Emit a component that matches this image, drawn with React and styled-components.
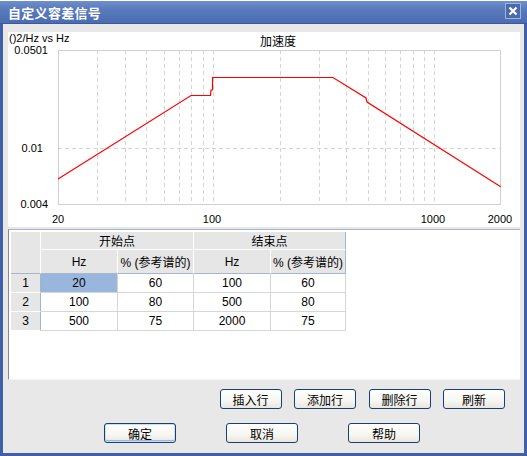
import React from "react";
import styled, { createGlobalStyle, css } from "styled-components";

const GlobalStyle = createGlobalStyle`
  html, body {
    margin: 0;
    padding: 0;
    background: #ffffff;
    overflow: hidden;
  }
  * {
    box-sizing: border-box;
  }
`;

const FONT = `"Liberation Sans", "Noto Sans CJK SC", sans-serif`;

const Window = styled.div`
  width: 527px;
  height: 455px;
  margin-top: 1px;
  display: flex;
  flex-direction: column;
  background: #3f5fa8;
  font-family: ${FONT};
  font-size: 12px;
  color: #000;
`;

const TitleBar = styled.div`
  height: 23px;
  display: flex;
  align-items: center;
  justify-content: space-between;
  padding: 0 6px 0 8px;
  background: linear-gradient(#6f8fcc 0%, #5a7bbd 35%, #4b6cb0 100%);
  border-bottom: 1px solid #3a5aa0;
`;

const Title = styled.span`
  color: #ffffff;
  font-size: 13px;
  font-weight: bold;
  letter-spacing: 0.3px;
`;

const CloseButton = styled.div`
  width: 16px;
  height: 16px;
  margin-top: -2px;
  border: 1px solid #9fb4dc;
  background: #4a6ab0;
  display: flex;
  align-items: center;
  justify-content: center;
`;

const Client = styled.div`
  flex: 1;
  margin: 0 3px 3px 3px;
  background: #e8e8e8;
  padding: 8px 0 0 5px;
  display: flex;
  flex-direction: column;
`;

const ChartPanel = styled.div`
  width: 512px;
  height: 195px;
  background: #ffffff;
`;

const TablePanel = styled.div`
  width: 512px;
  height: 151px;
  margin-top: 2px;
  background: #ffffff;
  border-top: 1px solid #a9b6c8;
  border-left: 1px solid #8a8a8a;
  border-bottom: 1px solid #f4f4f4;
  padding: 2px 0 0 2px;
`;

const Grid = styled.table`
  border-collapse: separate;
  border-spacing: 0;
  table-layout: fixed;
  width: 335px;
`;

const Cell = styled.td`
  padding: 0;
  text-align: center;
  vertical-align: middle;
  height: ${(p) => p.$h || 19}px;
  white-space: nowrap;
  overflow: hidden;
`;

const HeadCell = styled(Cell)`
  background: #e6e6e6;
  border-right: 1px solid ${(p) => (p.$last ? "#a4b6d2" : "#ffffff")};
  border-bottom: 1px solid ${(p) => (p.$lower ? "#a4b6d2" : "#ffffff")};
`;

const RowHead = styled(Cell)`
  background: #e6e6e6;
  border-right: 1px solid #9fb3d3;
  border-bottom: 1px solid #ffffff;
`;

const DataCell = styled(Cell)`
  background: ${(p) => (p.$selected ? "#99b6dc" : "#ffffff")};
  border-right: 1px solid #d6d6d6;
  border-bottom: 1px solid #d6d6d6;
`;

const ButtonRow = styled.div`
  display: flex;
  justify-content: ${(p) => p.$justify};
  gap: ${(p) => p.$gap}px;
  margin-top: ${(p) => p.$top}px;
  padding-right: ${(p) => p.$right || 0}px;
  padding-left: ${(p) => p.$left || 0}px;
`;

const Button = styled.div`
  width: ${(p) => p.$w}px;
  height: 20px;
  border: 1px solid #1c3f6e;
  border-radius: 3px;
  background: linear-gradient(#ffffff 0%, #f6f6f2 60%, #e8e6de 100%);
  display: flex;
  align-items: center;
  justify-content: center;
  font-size: 12px;
  ${(p) =>
    p.$default &&
    css`
      box-shadow: inset 0 0 0 1px #cbdcf3, inset 0 -1px 0 1px #9ab8e6;
    `}
`;

const X0 = 58;
const X1 = 501;
const Y0 = 50;
const Y1 = 204;
const fx = (f) => X0 + ((Math.log10(f) - Math.log10(20)) / 2) * (X1 - X0);
const fy = (v) =>
  Y1 - ((Math.log10(v) - Math.log10(0.004)) / Math.log10(0.0501 / 0.004)) * (Y1 - Y0);

const gridFreqs = [30, 40, 50, 60, 70, 80, 90, 100, 200, 300, 400, 500, 600, 700, 800, 900, 1000];

const curve =
  "58,179 191,95.5 210.5,95.5 211,90 212.5,90 212.5,77.5 333,77.5 366,98 367,102 500.7,186.7";

const Chart = () => {
  const y01 = Math.round(fy(0.01)) + 0.5;
  return (
    <svg width="512" height="195" viewBox="8 32 512 195" fontFamily={FONT} fontSize="11">
      <g shapeRendering="crispEdges" stroke="#d4d4d4" strokeWidth="1" strokeDasharray="4 3">
        {gridFreqs.map((f) => {
          const x = Math.round(fx(f)) + 0.5;
          return <line key={f} x1={x} y1={Y0} x2={x} y2={Y1} />;
        })}
        <line x1={X0} y1={y01} x2={X1} y2={y01} />
      </g>
      <rect
        x={X0 + 0.5}
        y={Y0 + 0.5}
        width={X1 - X0 - 1}
        height={Y1 - Y0}
        fill="none"
        stroke="#d0d0d0"
        shapeRendering="crispEdges"
      />
      <polyline points={curve} fill="none" stroke="#ff0000" strokeWidth="1.2" />
      <text x="9" y="42">()2/Hz vs Hz</text>
      <text x="278" y="46" textAnchor="middle" fontSize="12">加速度</text>
      <text x="48" y="54" textAnchor="end">0.0501</text>
      <text x="43" y="152" textAnchor="end">0.01</text>
      <text x="48" y="208" textAnchor="end">0.004</text>
      <text x="58" y="223" textAnchor="middle">20</text>
      <text x="212" y="223" textAnchor="middle">100</text>
      <text x="433" y="223" textAnchor="middle">1000</text>
      <text x="500" y="223" textAnchor="middle">2000</text>
    </svg>
  );
};

const rows = [
  ["20", "60", "100", "60"],
  ["100", "80", "500", "80"],
  ["500", "75", "2000", "75"],
];

const colWidths = [30, 77, 76, 77, 75];

const App = () => (
  <>
    <GlobalStyle />
    <Window>
      <TitleBar>
        <Title>自定义容差信号</Title>
        <CloseButton>
          <svg width="10" height="10" viewBox="0 0 10 10">
            <path d="M1.5 1.5 L8.5 8.5 M8.5 1.5 L1.5 8.5" stroke="#ffffff" strokeWidth="2.2" />
          </svg>
        </CloseButton>
      </TitleBar>
      <Client>
        <ChartPanel>
          <Chart />
        </ChartPanel>
        <TablePanel>
          <Grid>
            <colgroup>
              {colWidths.map((w, i) => (
                <col key={i} style={{ width: w }} />
              ))}
            </colgroup>
            <tbody>
              <tr>
                <HeadCell rowSpan={2} $h={18} $lower />
                <HeadCell colSpan={2} $h={18}>开始点</HeadCell>
                <HeadCell colSpan={2} $h={18} $last>结束点</HeadCell>
              </tr>
              <tr>
                <HeadCell $h={24} $lower>Hz</HeadCell>
                <HeadCell $h={24} $lower>% (参考谱的)</HeadCell>
                <HeadCell $h={24} $lower>Hz</HeadCell>
                <HeadCell $h={24} $lower $last>% (参考谱的)</HeadCell>
              </tr>
              {rows.map((r, i) => (
                <tr key={i}>
                  <RowHead>{i + 1}</RowHead>
                  {r.map((v, j) => (
                    <DataCell key={j} $selected={i === 0 && j === 0}>
                      {v}
                    </DataCell>
                  ))}
                </tr>
              ))}
            </tbody>
          </Grid>
        </TablePanel>
        <ButtonRow $justify="flex-end" $gap={12.5} $top={9} $right={19}>
          <Button $w={62}>插入行</Button>
          <Button $w={62}>添加行</Button>
          <Button $w={62}>删除行</Button>
          <Button $w={62}>刷新</Button>
        </ButtonRow>
        <ButtonRow $justify="flex-start" $gap={50} $top={14} $left={96}>
          <Button $w={72} $default>确定</Button>
          <Button $w={72}>取消</Button>
          <Button $w={72}>帮助</Button>
        </ButtonRow>
      </Client>
    </Window>
  </>
);

export default App;
